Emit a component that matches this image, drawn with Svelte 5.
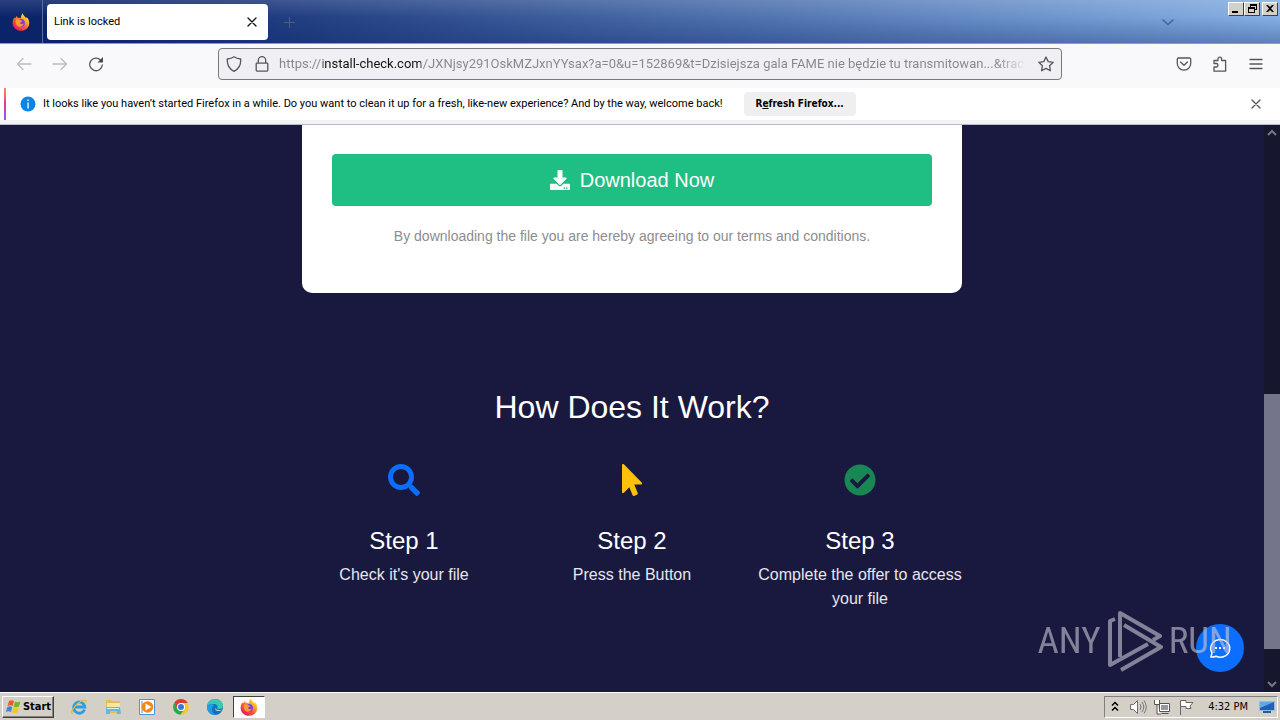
<script>
  const url =
    'https://install-check.com/JXNjsy291OskMZJxnYYsax?a=0&u=152869&t=Dzisiejsza gala FAME nie będzie tu transmitowan...&tracker';
  let address = $state(url);

  const steps = [
    { title: 'Step 1', text: "Check it's your file", icon: 'search' },
    { title: 'Step 2', text: 'Press the Button', icon: 'pointer' },
    { title: 'Step 3', text: 'Complete the offer to access your file', icon: 'check' }
  ];
</script>

{#snippet firefox(id)}
  <svg class="i18" viewBox="0 0 20 20" aria-hidden="true">
    <defs>
      <linearGradient id={id} x1="0.85" y1="0.05" x2="0.2" y2="0.95">
        <stop offset="0" stop-color="#fff04a" />
        <stop offset=".3" stop-color="#ffb02a" />
        <stop offset=".6" stop-color="#ff5a35" />
        <stop offset="1" stop-color="#e3175a" />
      </linearGradient>
    </defs>
    <path fill="url(#{id})" d="M12 .4c.3 2 1.4 2.800 2.600 4 .5.5 1 1 1.300 1.600l.3-1.500c2 1.900 3 4.300 3 6.500 0 5-4 8.700-9.200 8.700S.7 16 .7 11c0-2.500.8-4.600 2-6.200l.6 1.400L5.400 3.200l.8 2.200c1.500-.3 2.700 0 3.400.6C10 3.700 10.700 1.700 12 .4z" />
    <circle cx="10" cy="11" r="4.300" fill="#7a3fe0" />
    <path fill="#ff9a2c" d="M4.500 7.500c2.200-.9 4.200-.4 5 .5 1 .2 1.800.3 1.800.9-.2 1-2 1.200-2.300 2-.2 1.600 2 2.300 4 .9-.6 3-3.400 4.100-5.800 3.200C4.700 14 3.400 10.500 4.500 7.500z" />
  </svg>
{/snippet}

<div class="screen">
  <header class="tabs">
    <div class="brand">{@render firefox('fx-top')}</div>
    <div class="tab">
      <span>Link is locked</span>
      <button aria-label="Close tab">
        <svg class="i16" viewBox="0 0 16 16"><path class="line dark" d="M4 4l8 8M12 4l-8 8" /></svg>
      </button>
    </div>
    <button class="new" aria-label="New tab">
      <svg class="i16" viewBox="0 0 16 16"><path fill="none" stroke="#4b6072" d="M8.500 3v11M3 8.500h11" /></svg>
    </button>
    <button class="alltabs" aria-label="List all tabs">
      <svg class="i16" viewBox="0 0 16 16"><path fill="none" stroke="#4a658f" stroke-width="1.500" d="M2.500 5.500L8 10.500l5.500-5" /></svg>
    </button>
    <div class="winbtns">
      <button aria-label="Minimize"><svg viewBox="0 0 12 10"><path d="M2 7h6v2H2z" /></svg></button>
      <button aria-label="Restore"><svg viewBox="0 0 12 10"><path d="M4 0h7v6H9V9H2V3h2zM5 2v1h4v2h1V2zM3 5v3h5V5z" fill-rule="evenodd" /></svg></button>
      <button class="close" aria-label="Close"><svg viewBox="0 0 12 10"><path d="M2 1h2l2 2 2-2h2L7 4.500 10 8H8L6 6 4 8H2l3-3.500z" /></svg></button>
    </div>
  </header>

  <nav class="toolbar">
    <div class="navbtns">
      <button aria-label="Back" disabled><svg class="i16" viewBox="0 0 16 16"><path class="line faint" d="M15 8H1.500M7 2.500L1.500 8 7 13.500" /></svg></button>
      <button aria-label="Forward" disabled><svg class="i16" viewBox="0 0 16 16"><path class="line faint" d="M1 8h13.500M9 2.500L14.500 8 9 13.500" /></svg></button>
      <button aria-label="Reload"><svg class="i16" viewBox="0 0 16 16"><path class="line" stroke-width="1.500" d="M12.500 4A6.300 6.300 0 1 0 14.300 9" /><path fill="#4a4a52" d="M15 1v5.500H9.500z" /></svg></button>
    </div>
    <div class="urlbar">
      <svg class="i16" viewBox="0 0 16 16" aria-hidden="true"><path class="line" d="M8 .8c2 1.500 4.300 2 6.700 2.200C15 8.500 13 13 8 15.300 3 13 1 8.500 1.300 3 3.700 2.800 6 2.300 8 .8z" /></svg>
      <svg class="i16" viewBox="0 0 16 16" aria-hidden="true"><path class="line" d="M4.300 7V4.300a3.700 3.700 0 0 1 7.400 0V7M3 7.200h10a.8.8 0 0 1 .8.8v6a1.200 1.200 0 0 1-1.200 1.200H3.400A1.200 1.200 0 0 1 2.200 14V8a.8.8 0 0 1 .8-.8z" /></svg>
      <input aria-label="Address" bind:value={address} spellcheck="false" />
      <button aria-label="Bookmark this page"><svg class="i16" viewBox="0 0 16 16"><path class="line" d="M8 1l2.200 4.600 5 .7-3.600 3.500.8 5L8 12.400l-4.400 2.400.8-5L.8 6.300l5-.7z" /></svg></button>
    </div>
    <div class="tools">
      <button aria-label="Save to Pocket"><svg class="i16" viewBox="0 0 16 16"><path class="line" d="M2.500 2h11A1.200 1.200 0 0 1 14.700 3.200V7.500a6.700 6.700 0 0 1-13.400 0V3.200A1.200 1.200 0 0 1 2.500 2zM4.500 6L8 9.300 11.500 6" /></svg></button>
      <button aria-label="Extensions"><svg class="i16" viewBox="0 0 16 16"><path class="line" d="M2 15.200V11h2.200a1.700 1.700 0 0 0 0-3.500H2V4.500h4V3a1.800 1.800 0 0 1 3.600 0v1.500h4V15.200z" /></svg></button>
      <button aria-label="Menu"><svg class="i16" viewBox="0 0 16 16"><path class="line" d="M2 3.500h12M2 8h12M2 12.500h12" /></svg></button>
    </div>
  </nav>

  <div class="notice">
    <svg class="i16" viewBox="0 0 16 16" aria-hidden="true"><circle cx="8" cy="8" r="7.500" fill="#0a84e8" /><path fill="#d8f4ff" d="M7.300 3.500h1.500v1.600H7.300zM7.300 6.500h1.500v6H7.300z" /></svg>
    <p>It looks like you haven’t started Firefox in a while. Do you want to clean it up for a fresh, like-new experience? And by the way, welcome back!</p>
    <button class="refresh">R<u>e</u>fresh Firefox...</button>
    <button class="dismiss" aria-label="Dismiss"><svg class="i16" viewBox="0 0 16 16"><path class="line" d="M4 4l8 8M12 4l-8 8" /></svg></button>
  </div>

  <div class="view">
    <main>
      <section class="card">
        <button class="download">
          <svg viewBox="0 0 512 512" aria-hidden="true"><path d="M216 0h80c13.300 0 24 10.700 24 24v168h87.700c17.800 0 26.700 21.500 14.100 34.100L269.700 378.300c-7.500 7.500-19.800 7.500-27.300 0L90.100 226.100c-12.600-12.600-3.700-34.100 14.100-34.100H192V24c0-13.300 10.700-24 24-24zm296 376v112c0 13.300-10.700 24-24 24H24c-13.300 0-24-10.700-24-24V376c0-13.300 10.700-24 24-24h146.700l49 49c20.100 20.100 52.500 20.100 72.600 0l49-49H488c13.300 0 24 10.700 24 24zm-124 88c0-11-9-20-20-20s-20 9-20 20 9 20 20 20 20-9 20-20zm64 0c0-11-9-20-20-20s-20 9-20 20 9 20 20 20 20-9 20-20z" /></svg>
          Download Now
        </button>
        <p>By downloading the file you are hereby agreeing to our terms and conditions.</p>
      </section>
      <section class="how">
        <h2>How Does It Work?</h2>
        <div class="steps">
          {#each steps as step}
            <article>
              {#if step.icon === 'search'}
                <svg viewBox="0 0 512 512" fill="#0d6efd" aria-hidden="true"><path d="M505 442.700L405.300 343c-4.500-4.500-10.600-7-17-7H372c27.600-35.300 44-79.700 44-128C416 93.100 322.900 0 208 0S0 93.100 0 208s93.100 208 208 208c48.300 0 92.700-16.400 128-44v16.300c0 6.400 2.500 12.500 7 17l99.700 99.700c9.400 9.400 24.600 9.400 33.900 0l28.300-28.300c9.400-9.400 9.400-24.600.1-34zM208 336c-70.700 0-128-57.200-128-128 0-70.700 57.200-128 128-128 70.700 0 128 57.200 128 128 0 70.700-57.200 128-128 128z" /></svg>
              {:else if step.icon === 'pointer'}
                <svg viewBox="0 0 320 512" fill="#ffc107" aria-hidden="true"><path d="M302.189 329.126H196.105l55.831 135.993c3.889 9.428-.555 19.999-9.444 23.999l-49.165 21.427c-9.165 4-19.443-.571-23.332-9.714l-53.053-129.136-86.664 89.138C18.729 472.710 0 463.554 0 447.977V18.299C0 1.899 19.921-6.096 30.277 5.443l284.412 292.542c11.472 11.179 3.007 31.141-12.500 31.141z" /></svg>
              {:else}
                <svg viewBox="0 0 512 512" fill="#198754" aria-hidden="true"><path d="M504 256c0 136.967-111.033 248-248 248S8 392.967 8 256 119.033 8 256 8s248 111.033 248 248zM227.314 387.314l184-184c6.248-6.248 6.248-16.379 0-22.627l-22.627-22.627c-6.248-6.249-16.379-6.249-22.628 0L216 308.118l-70.059-70.059c-6.248-6.248-16.379-6.248-22.628 0l-22.627 22.627c-6.248 6.248-6.248 16.379 0 22.627l104 104c6.249 6.249 16.379 6.249 22.628.001z" fill-rule="evenodd" /></svg>
              {/if}
              <h3>{step.title}</h3>
              <p>{step.text}</p>
            </article>
          {/each}
        </div>
      </section>
    </main>
    <div class="scroll" aria-hidden="true">
      <svg viewBox="0 0 16 16"><path d="M4 10l4-4 4 4" /></svg>
      <div class="thumb"></div>
      <svg viewBox="0 0 16 16"><path d="M4 6l4 4 4-4" /></svg>
    </div>
    <button class="chat" aria-label="Open chat">
      <svg viewBox="0 0 24 24"><path d="M3 21l1-4.200A9.500 8.800 0 1 1 8 20.300C6.500 21 4.800 21.200 3 21z" fill="none" stroke="#fff" stroke-width="1.500" /><path fill="#fff" d="M7 11h2v2H7zM11 11h2v2h-2zM15 11h2v2h-2z" /></svg>
    </button>
    <div class="mark">
      <span>ANY</span>
      <svg viewBox="0 0 56 62" aria-hidden="true"><path fill="none" stroke="currentColor" stroke-width="4" stroke-linejoin="round" d="M8 9L3 11V55L41 34M13 47V3L53 26L46 30M17 15L54 37L14 60" /></svg>
      <span>RUN</span>
    </div>
  </div>

  <footer class="taskbar">
    <button class="start">
      <svg viewBox="0 0 18 16" aria-hidden="true"><path fill="#ea5b26" d="M4 2c2-1.300 3.500-1 5 0L7.600 7C6 6 4.500 6 2.600 7z" /><path fill="#72b52f" d="M10 2.500c2 1 3.500 1 5.500 0L14 7.500c-2 1-3.500 1-5.400 0z" /><path fill="#3b87d8" d="M2.300 8c2-1 3.500-1 5 0L6 13c-1.600-1-3-1-5 0z" /><path fill="#f7c51e" d="M8.300 8.500c2 1 3.500 1 5.500 0l-1.500 5c-2 1-3.500 1-5.300 0z" /></svg>
      Start
    </button>
    <div class="apps">
      <button aria-label="Internet Explorer"><svg class="i18" viewBox="0 0 18 18"><path fill="none" stroke="#2f9ede" stroke-width="2.800" d="M14.500 11.500A5.600 5.600 0 1 1 14.800 9H5" /><path fill="none" stroke="#e8b93c" stroke-width="1.300" d="M2.500 16C0 14.500 4 8 9 4.500c4-3 8-3.500 7.200 0" /></svg></button>
      <button aria-label="Explorer"><svg class="i18" viewBox="0 0 18 18"><path fill="#e5bd55" d="M2 2h5l1 1h8v12H2z" /><path fill="#f9e69a" d="M3 5h13v7H3z" /><path fill="#65b8dd" d="M2 9h14l1 7h-4v-3H6v3H2z" /><path fill="#d8f1fb" d="M3 10h12v1H3z" /></svg></button>
      <button aria-label="Media Player"><svg class="i18" viewBox="0 0 18 18"><path fill="#fff" stroke="#4d95d4" d="M1.500 1.500h15v15h-15z" /><path fill="#9ecbe9" d="M3 3h2v12H3z" /><circle cx="9.500" cy="9" r="5.800" fill="#f48715" /><path fill="#fff" d="M7.500 5.500l6 3.500-6 3.500z" /></svg></button>
      <button aria-label="Chrome"><svg class="i18" viewBox="0 0 18 18"><circle cx="9" cy="9" r="7.800" fill="#f7c62e" /><path fill="#dc3d31" d="M2.200 5.100A7.800 7.800 0 0 1 15.800 5.100H9L5.700 11z" /><path fill="#29a451" d="M2.200 5.100L5.600 11 9 12.900l2.500-.4-3.200 4.300A7.800 7.800 0 0 1 2.200 5.100z" /><circle cx="9" cy="9" r="4" fill="#fff" /><circle cx="9" cy="9" r="3" fill="#3977df" /></svg></button>
      <button aria-label="Edge"><svg class="i18" viewBox="0 0 18 18"><circle cx="9" cy="9" r="8" fill="#1270bd" /><path fill="#3cc8b0" d="M1.200 8C2 3 5.500 1 9 1c5 0 8 3.300 8 6.700 0 3-3.400 4-6 2.800 1.500-2.500-.5-4.500-3-4.500C5 6 2.500 6.500 1.200 8z" /><path fill="#1b9de0" d="M1.200 8C3 5 8 5.500 8 7.500c-3 2-2.500 7 1.500 9.400C4 17.500.5 13 1.200 8z" /><path fill="#d4d0c8" d="M9.500 8.500c-1 2 1 4.500 6.500 3.200-2 2.300-8.500 2-6.500-3.200z" /></svg></button>
      <button class="active" aria-label="Firefox">{@render firefox('fx-task')}</button>
    </div>
    <div class="tray">
      <svg class="i16" viewBox="0 0 16 16" aria-hidden="true"><path fill="none" stroke="#000" stroke-width="1.500" d="M5 6.500L8 3.500l3 3M5 11.500l3-3 3 3" /></svg>
      <svg class="i18" viewBox="0 0 18 18" aria-hidden="true"><path fill="#fff" stroke="#6d6d6d" d="M1.500 6.500h3l4-4v13l-4-4h-3z" /><path fill="none" stroke="#777" d="M11 6q2 3 0 6M13 4q3.500 5 0 10M15 2.500q4.500 6.500 0 13" /></svg>
      <svg class="i18" viewBox="0 0 18 18" aria-hidden="true"><path fill="#fff" stroke="#555" d="M6.500 5.500h10v8h-10zM8.500 15.500h7M1.500 2v4.500h5V2M4 6.500V16h4" /><path fill="#999" d="M8 7h7v5H8z" /></svg>
      <svg class="i18" viewBox="0 0 18 18" aria-hidden="true"><path fill="#fff" stroke="#666" d="M3.500 17V2.500H9v2h7l-3 3.500 1 2.500H9v-2H3.500" /></svg>
      <time>4:32 PM</time>
      <svg class="i16" viewBox="0 0 16 16" aria-hidden="true"><path fill="#1f62b5" stroke="#8ebae5" d="M.5 2.500h15v9H.5z" /><path fill="#66a6e4" d="M1 3h14L1 9z" /><path fill="#315988" d="M4 12h8v2H4z" /></svg>
    </div>
  </footer>
</div>

<style>
  :global(body) { margin: 0; }
  * { box-sizing: border-box; }
  .screen {
    height: 100vh;
    display: flex;
    flex-direction: column;
    overflow: hidden;
    font: 11px/16px "DejaVu Sans Condensed", "Noto Sans", sans-serif;
    color: #000;
  }
  button { border: 0; padding: 0; background: none; font: inherit; color: inherit; display: flex; align-items: center; justify-content: center; }
  p, h2, h3 { margin: 0; }
  svg { display: block; flex: none; }
  .i16 { width: 16px; height: 16px; }
  .i18 { width: 18px; height: 18px; }
  .line { fill: none; stroke: #55555e; stroke-width: 1.3; stroke-linejoin: round; stroke-linecap: round; }
  .line.dark { stroke: #111; }
  .line.faint { stroke: #bbbbc2; }

  .tabs {
    height: 44px;
    flex: none;
    display: flex;
    align-items: flex-start;
    background: linear-gradient(180deg, #ffffff22, #ffffff00 40%, #0a246a55), linear-gradient(90deg, #0a246a 5%, #86b0e4);
    border-bottom: 1px solid #9a9aa8;
  }
  .brand { width: 43px; height: 43px; display: flex; align-items: center; justify-content: center; border-right: 1px solid #5c6da0; }
  .tab { width: 221px; height: 36px; margin: 4px 0 0 4px; padding: 0 8px 0 7px; display: flex; align-items: center; justify-content: space-between; background: #fff; border-radius: 4px; font-family: Roboto, sans-serif; }
  .new { margin: 14px 0 0 13px; }
  .alltabs { margin: 14px 0 0 auto; }
  .winbtns { display: flex; margin: 2px 2px 0 52px; }
  .winbtns button { width: 16px; height: 14px; background: #d4d0c8; border: 1px solid; border-color: #fff #404040 #404040 #fff; }
  .winbtns svg { width: 12px; height: 10px; }
  .winbtns .close { margin-left: 2px; }

  .toolbar { height: 44px; flex: none; display: grid; grid-template-columns: 1fr minmax(0, 844px) 1fr; align-items: center; padding-bottom: 4px; background: #f9f9fb; }
  .navbtns { display: flex; gap: 20px; padding-left: 16px; }
  .tools { display: flex; justify-content: flex-end; gap: 20px; padding-right: 16px; }
  .urlbar { height: 32px; display: flex; align-items: center; gap: 12px; padding: 0 7px; background: #f0f0f4; border: 1px solid #77777f; border-radius: 4px; }
  .urlbar input {
    flex: 1;
    min-width: 0;
    height: 24px;
    margin-left: -3px;
    padding: 0;
    border: 0;
    outline: 0;
    font: 13px/24px Roboto, "Noto Sans", sans-serif;
    color: transparent;
    caret-color: #000;
    background: linear-gradient(90deg, #85858c 44px, #111 44px 142px, #85858c 142px calc(100% - 30px), #f0f0f4);
    -webkit-background-clip: text;
    background-clip: text;
  }

  .notice { height: 37px; flex: none; display: flex; align-items: center; padding: 0 16px 5px 16px; background: linear-gradient(#ff8a50, #e0399b, #9059ff) 4px 0 / 2px 32px no-repeat, #fff; border-bottom: 1px solid #b9b9cc; box-shadow: inset 0 -4px #f3f3f6; }
  .notice > svg { margin-left: 4px; }
  .notice p { margin-left: 7px; white-space: nowrap; font-family: Roboto, sans-serif; }
  .refresh { width: 112px; height: 24px; margin-left: 21px; background: #efeff1; border-radius: 4px; font-weight: 700; white-space: pre; font-size: 10px; }
  .dismiss { margin-left: auto; }

  .view { flex: 1; min-height: 0; display: flex; position: relative; background: #19193f; font-family: "Liberation Sans", Arial, sans-serif; }
  main { flex: 1; display: flex; flex-direction: column; align-items: center; overflow: hidden; }
  .card { width: 100%; max-width: 660px; padding: 29px 30px 46px; background: #fff; border-radius: 0 0 10px 10px; text-align: center; }
  .download { width: 100%; height: 52px; gap: 10px; background: #1fbe82; border-radius: 4px; color: #fff; font-size: 20px; }
  .download svg { width: 20px; height: 20px; fill: #fff; }
  .card p { margin-top: 20px; font-size: 14px; line-height: 21px; color: #8d8d8d; }
  .how { width: 100%; max-width: 684px; margin-top: 95px; color: #fff; text-align: center; }
  h2 { font-size: 32px; line-height: 38px; font-weight: 400; }
  .steps { display: grid; grid-template-columns: repeat(3, 1fr); margin-top: 38px; }
  article { padding: 0 12px; }
  article svg { height: 32px; margin: 0 auto; }
  h3 { margin-top: 30px; font-size: 24px; line-height: 29px; font-weight: 400; }
  article p { margin-top: 8px; font-size: 16px; line-height: 24px; color: #e6e6ee; }

  .scroll { width: 16px; display: flex; flex-direction: column; background: #16162f; }
  .scroll svg { width: 16px; height: 16px; fill: none; stroke: #777789; stroke-width: 2; }
  .thumb { height: 45%; margin-top: auto; margin-bottom: 27px; background: #74748a; }
  .chat { position: absolute; right: 36px; bottom: 20px; width: 48px; height: 48px; border-radius: 50%; background: #0d6efd; }
  .chat svg { width: 24px; height: 24px; }
  .mark { position: absolute; right: 48px; bottom: 20px; display: flex; align-items: center; gap: 6px; color: #c8c8d5; opacity: .6; font: 37px/62px "Roboto Condensed", "Liberation Sans Narrow", "Liberation Sans", sans-serif; }
  .mark svg { width: 56px; height: 62px; }

  .taskbar { height: 28px; flex: none; display: flex; align-items: center; padding: 0 2px; background: #d4d0c8; border-top: 1px solid #fff; }
  .start { width: 52px; height: 22px; font-weight: 700; border: 1px solid; border-color: #fff #404040 #404040 #fff; box-shadow: inset -1px -1px #808080; }
  .start svg { width: 18px; height: 16px; }
  .apps { display: flex; margin-left: 9px; gap: 2px; }
  .apps button { width: 32px; height: 22px; }
  .apps .active { background: #fff; border: 1px solid; border-color: #404040 #fff #fff #404040; }
  .tray { margin-left: auto; height: 22px; display: flex; align-items: center; gap: 6px; padding: 0 2px; border: 1px solid; border-color: #808080 #fff #fff #808080; }
  time { margin: 0 5px 0 7px; white-space: nowrap; }
</style>
